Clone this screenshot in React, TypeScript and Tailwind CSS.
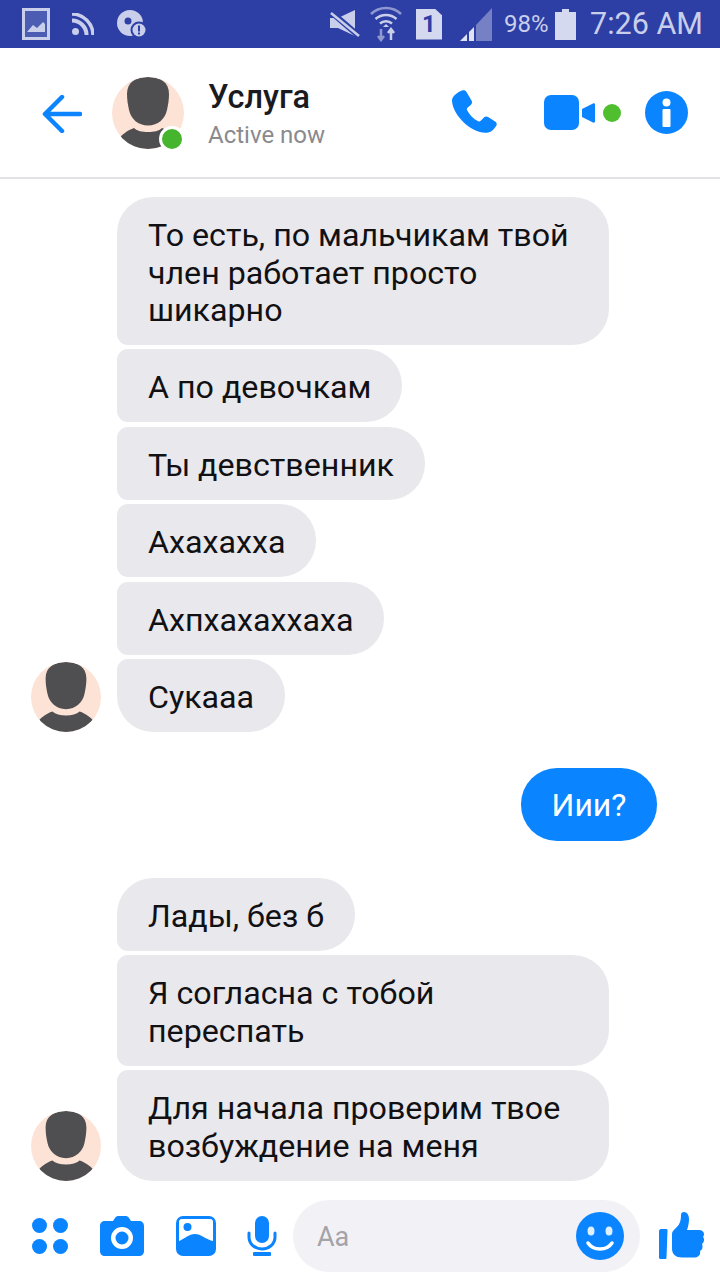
import React from 'react';

const FONT = "font-['Roboto','Liberation_Sans',sans-serif]";

const Silhouette = ({ size }: { size: number }) => (
  <svg width={size} height={size} viewBox="0 0 72 72" className="block shrink-0">
    <defs>
      <clipPath id={`face-${size}`}>
        <circle cx="36" cy="36" r="36" />
      </clipPath>
    </defs>
    <g clipPath={`url(#face-${size})`}>
      <rect width="72" height="72" fill="#fde3d6" />
      <path d="M15 17C15 5 24 0 36 0s21 5 21 17c0 6-1 11-2 16-2 9-9 15.500-19 15.500S19 42 17 33c-1-5-2-10-2-16Z" fill="#4f4e50" />
      <path d="M6 72V63c3-5 10-10 16-12 3 3 8 4 14 4s11-1 14-4c6 2 13 7 16 12v9Z" fill="#4f4e50" />
    </g>
  </svg>
);

const Bubble = ({ lines, shape }: { lines: string[]; shape: string }) => (
  <div className={`self-start bg-[#e9e8ec] text-[#111114] text-[32.200px] leading-[37.500px] pl-[31px] pr-[31px] pt-[20px] pb-[15.500px] ${shape}`}>
    {lines.map(l => (
      <div key={l} className="whitespace-nowrap">{l}</div>
    ))}
  </div>
);

const StatusBar = () => (
  <div className="h-[48px] bg-[#2d3fa5] flex items-center pl-[22px] pr-[17px] text-[#c9cfeb]">
    <svg width="28" height="32" viewBox="0 0 28 32" className="shrink-0">
      <path fillRule="evenodd" d="M0 0h28v32H0ZM3 3v26h22V3Z" fill="#c9cfeb" />
      <rect x="3" y="3" width="22" height="26" fill="#aab2dc" opacity=".25" />
      <path d="M5 24l6-7 4 3 6-6 2 2v8Z" fill="#c9cfeb" />
    </svg>
    <svg width="22" height="22" viewBox="0 0 22 22" className="ml-[22px] shrink-0">
      <circle cx="3.500" cy="18.500" r="3.500" fill="#c9cfeb" />
      <path d="M0 7.500a14.500 14.500 0 0 1 14.500 14.500" fill="none" stroke="#c9cfeb" strokeWidth="4" />
      <path d="M0 1a21 21 0 0 1 21 21" fill="none" stroke="#c9cfeb" strokeWidth="3.500" />
    </svg>
    <svg width="30" height="28" viewBox="0 0 30 28" className="ml-[23px] shrink-0">
      <circle cx="13" cy="13" r="13" fill="#c9cfeb" />
      <circle cx="11" cy="11" r="3.500" fill="#2d3fa5" />
      <circle cx="22" cy="20" r="8.500" fill="#2d3fa5" />
      <circle cx="22" cy="20" r="6.500" fill="#c9cfeb" />
      <rect x="21" y="15.500" width="2" height="6" fill="#2d3fa5" />
      <rect x="21" y="22.500" width="2" height="2" fill="#2d3fa5" />
    </svg>
    <svg width="30" height="28" viewBox="0 0 30 28" className="ml-[183px] shrink-0">
      <path d="M0 8h8L25 0v26L8 18H0Z" fill="#c9cfeb" />
      <path d="M1 2l28 24" stroke="#2d3fa5" strokeWidth="6" />
      <path d="M1 3l28 23" stroke="#c9cfeb" strokeWidth="2.500" />
    </svg>
    <svg width="32" height="36" viewBox="0 0 32 36" className="ml-[10px] shrink-0">
      <path d="M1 8a22 22 0 0 1 30 0" fill="none" stroke="#8f99cf" strokeWidth="2.500" />
      <path d="M5.500 13a16 16 0 0 1 21 0" fill="none" stroke="#c9cfeb" strokeWidth="2.500" />
      <path d="M10 17.500a9 9 0 0 1 12 0" fill="none" stroke="#c9cfeb" strokeWidth="2.500" />
      <path d="M13 21l3-3 3 3Z" fill="#c9cfeb" />
      <path d="M11 23v10M8 30l3 4 3-4" fill="none" stroke="#8f99cf" strokeWidth="2.500" />
      <path d="M21 34V24M18 27l3-4 3 4" fill="none" stroke="#c9cfeb" strokeWidth="2.500" />
    </svg>
    <div className="ml-[14px] w-[26px] h-[31px] bg-[#d5d9f0] text-[#2d3fa5] text-[24px] font-bold leading-[31px] text-center [clip-path:polygon(0_0,72%_0,100%_22%,100%_100%,0_100%)] shrink-0">
      1
    </div>
    <svg width="34" height="33" viewBox="0 0 34 33" className="ml-[17px] shrink-0">
      <path d="M17 33V17L33 0v33Z" fill="#7581c4" />
      <path d="M10 33V24l5-5v14Z" fill="#dfe2f4" />
      <path d="M1 33l7-7v7Z" fill="#dfe2f4" />
    </svg>
    <span className="ml-[11px] text-[24px] leading-none whitespace-nowrap">98%</span>
    <svg width="21" height="31" viewBox="0 0 21 31" className="ml-[6px] shrink-0">
      <path d="M7 0h7v3h7v28H0V3h7Z" fill="#d5d9f0" />
    </svg>
    <span className="ml-auto text-[30.500px] leading-none whitespace-nowrap">7:26 AM</span>
  </div>
);

const Header = () => (
  <div className="h-[131px] border-b-2 border-[#e2e2e6] flex items-center pl-[42px] bg-white">
    <svg width="40" height="38" viewBox="0 0 40 38" className="shrink-0 mt-[2px]">
      <path d="M38 19H3M20 2 3 19l17 17" fill="none" stroke="#0a84ff" strokeWidth="4.500" strokeLinecap="round" strokeLinejoin="round" />
    </svg>
    <div className="relative ml-[30px] w-[72px] h-[72px] shrink-0">
      <Silhouette size={72} />
      <span className="absolute left-[47px] top-[49px] w-[26px] h-[26px] rounded-full bg-[#45b52e] border-[3px] border-white" />
    </div>
    <div className="ml-[24px] w-[243px] pt-[2px] shrink-0">
      <div className="text-[32.500px] leading-[36px] font-medium text-[#1b1b1f]">Услуга</div>
      <div className="text-[24px] leading-[28px] mt-[6px] text-[#8a8a8e]">Active now</div>
    </div>
    <svg width="46" height="46" viewBox="0 0 46 46" className="shrink-0">
      <path d="M11 .500c2-.800 3.500-.300 4.500 1.500l5 8.500c1 1.700.600 3.300-.800 4.500l-3.200 2.700c-.800.700-.900 1.500-.400 2.500 2.800 5 6.200 8.500 11 11 1 .500 1.900.400 2.600-.400l3-3.100c1.200-1.300 2.800-1.600 4.400-.600l7 4.500c1.700 1.100 2.100 2.800 1 4.500-2 3-4.500 6-8 6.500C22 45 2 26 1 11 .800 6.500 6 2.500 11 .500Z" fill="#0a84ff" />
    </svg>
    <div className="ml-[47px] w-[35px] h-[35px] rounded-[7px] bg-[#0a84ff] shrink-0" />
    <svg width="13" height="20" viewBox="0 0 13 20" className="ml-[3px] shrink-0">
      <path d="M0 6 11 .500c1-.500 2 0 2 1v17c0 1-1 1.500-2 1L0 14Z" fill="#0a84ff" />
    </svg>
    <span className="ml-[8px] w-[18px] h-[18px] rounded-full bg-[#4fbe2f] shrink-0" />
    <svg width="43" height="43" viewBox="0 0 43 43" className="ml-[24px] shrink-0">
      <circle cx="21.500" cy="21.500" r="21.500" fill="#0a84ff" />
      <circle cx="21.500" cy="11.500" r="4" fill="#fff" />
      <rect x="17.500" y="18" width="8" height="18" rx="1" fill="#fff" />
    </svg>
  </div>
);

const Composer = () => (
  <div className="mt-[19px] flex items-center pl-[32px]">
    <svg width="36" height="36" viewBox="0 0 36 36" className="shrink-0">
      <circle cx="7.500" cy="7.500" r="7.500" fill="#0a84ff" />
      <circle cx="28.500" cy="7.500" r="7.500" fill="#0a84ff" />
      <circle cx="7.500" cy="28.500" r="7.500" fill="#0a84ff" />
      <circle cx="28.500" cy="28.500" r="7.500" fill="#0a84ff" />
    </svg>
    <svg width="44" height="40" viewBox="0 0 44 40" className="ml-[32px] shrink-0">
      <path fillRule="evenodd" d="M5 5h8l2-3c1-1.500 2-2 4-2h6c2 0 3 .500 4 2l2 3h8c3 0 5 2 5 5v25c0 3-2 5-5 5H5c-3 0-5-2-5-5V10c0-3 2-5 5-5Zm17 6a11 11 0 1 0 0 22 11 11 0 0 0 0-22Zm0 4.500a6.500 6.500 0 1 1 0 13 6.500 6.500 0 0 1 0-13Z" fill="#0a84ff" />
    </svg>
    <svg width="40" height="40" viewBox="0 0 40 40" className="ml-[32px] shrink-0">
      <rect x="0" y="0" width="40" height="40" rx="7" fill="#0a84ff" />
      <rect x="3" y="3" width="34" height="27" rx="3" fill="#fff" />
      <circle cx="11.500" cy="11" r="4" fill="#0a84ff" />
      <path d="M3 25c5-2 10-7 16-7s10 5 18 7v12H3Z" fill="#0a84ff" />
    </svg>
    <svg width="30" height="40" viewBox="0 0 30 40" className="ml-[31px] shrink-0">
      <rect x="8" y="0" width="14" height="27" rx="7" fill="#0a84ff" />
      <path d="M2 17v4c0 7 6 12 13 12s13-5 13-12v-4" fill="none" stroke="#0a84ff" strokeWidth="3" strokeLinecap="round" />
      <rect x="6" y="36" width="18" height="4" rx="1" fill="#0a84ff" />
    </svg>
    <div className="ml-[16px] w-[347px] h-[72px] rounded-[36px] bg-[#f2f1f6] flex items-center pl-[24px] pr-[16px] shrink-0">
      <span className="text-[27px] text-[#a3a3a8] pt-[3px]">Aa</span>
      <svg width="48" height="48" viewBox="0 0 48 48" className="ml-auto shrink-0">
        <circle cx="24" cy="24" r="24" fill="#0a84ff" />
        <ellipse cx="15" cy="19" rx="3.500" ry="4.500" fill="#dff0ff" />
        <ellipse cx="33" cy="19" rx="3.500" ry="4.500" fill="#dff0ff" />
        <path d="M12 31c3 4.500 7 6 12 6s9-1.500 12-6" fill="none" stroke="#fff" strokeWidth="3.500" strokeLinecap="round" />
      </svg>
    </div>
    <svg width="46" height="48" viewBox="0 0 46 48" className="ml-[18px] shrink-0">
      <path d="M3 17h5c1 0 1.500.500 1.500 1.500l-1 27c0 1-.500 1.500-1.500 1.500H3c-1 0-2-.500-2-1.500V19c0-1 1-2 2-2Z" fill="#0a84ff" />
      <path d="M14 22c0-3 2-4 4-6 3-3 5-6 5-13 0-2 1-3 3-3 3 0 5 3 5 7 0 4-1 8-2 11h12c3 0 5 2 5 4 0 2-1 3-1 3 1 1 1 2 1 3 0 2-1 3-2 4 .500 1 .500 2 .500 3 0 2-1 3-2.500 4 .500 2 0 4-1.500 5-1 1-3 1.500-5 1.500H24c-6 0-10-3-10-9Z" fill="#0a84ff" />
    </svg>
  </div>
);

export default function App() {
  return (
    <div className={`w-[720px] h-[1280px] overflow-hidden bg-white ${FONT}`}>
      <StatusBar />
      <Header />

      <div className="pt-[18px] pl-[31px]">
        <div className="flex items-end gap-[16px]">
          <Silhouette size={70} />
          <div className="flex flex-col gap-[4.400px]">
            <Bubble shape="w-[492px] rounded-[36px] rounded-bl-[11px]" lines={['То есть, по мальчикам твой', 'член работает просто', 'шикарно']} />
            <Bubble shape="rounded-r-[36px] rounded-l-[11px]" lines={['А по девочкам']} />
            <Bubble shape="rounded-r-[36px] rounded-l-[11px]" lines={['Ты девственник']} />
            <Bubble shape="rounded-r-[36px] rounded-l-[11px]" lines={['Ахахахха']} />
            <Bubble shape="rounded-r-[36px] rounded-l-[11px]" lines={['Ахпхахаххаха']} />
            <Bubble shape="rounded-[36px] rounded-tl-[11px]" lines={['Сукааа']} />
          </div>
        </div>

        <div className="mt-[36px] flex justify-end pr-[63px]">
          <div className="w-[136px] text-center h-[73px] rounded-[36px] bg-[#0a84ff] text-white text-[32px] leading-[75px]">Иии?</div>
        </div>

        <div className="mt-[37px] flex items-end gap-[16px]">
          <Silhouette size={70} />
          <div className="flex flex-col gap-[4.400px]">
            <Bubble shape="rounded-[36px] rounded-bl-[11px]" lines={['Лады, без б']} />
            <Bubble shape="rounded-r-[36px] rounded-l-[11px] w-[492px]" lines={['Я согласна с тобой', 'переспать']} />
            <Bubble shape="rounded-[36px] rounded-tl-[11px] w-[492px]" lines={['Для начала проверим твое', 'возбуждение на меня']} />
          </div>
        </div>
      </div>

      <Composer />
    </div>
  );
}
